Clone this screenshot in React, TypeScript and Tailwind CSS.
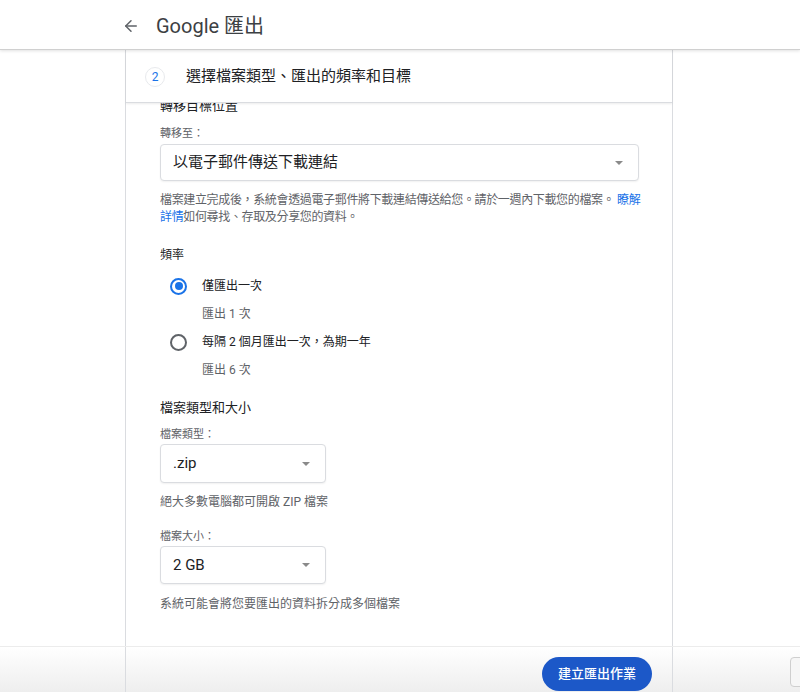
import { ArrowLeft } from 'lucide-react';

const font = { fontFamily: 'Roboto, "Noto Sans CJK TC", sans-serif' };

function Caret() {
  return (
    <span className="h-0 w-0 border-x-[4px] border-t-[4px] border-x-transparent border-t-[#8a8a8a]" />
  );
}

function Select({ value, className = '' }: { value: string; className?: string }) {
  return (
    <div
      className={`flex items-center justify-between rounded-[4px] border border-[#dadce0] bg-white pl-[12px] pr-[15px] text-[15px] text-[#202124] shadow-[0_1px_2px_rgba(0,0,0,0.06)] ${className}`}
    >
      <span>{value}</span>
      <Caret />
    </div>
  );
}

function Radio({ checked, label }: { checked: boolean; label: string }) {
  return (
    <div className="flex h-[24px] items-center pl-[10px]">
      <span
        className={`flex h-[17px] w-[17px] items-center justify-center rounded-full border-2 ${
          checked ? 'border-[#1a73e8]' : 'border-[#5f6368]'
        }`}
      >
        {checked && <span className="h-[8px] w-[8px] rounded-full bg-[#1a73e8]" />}
      </span>
      <span className="ml-[15px] text-[12px] text-[#202124]">{label}</span>
    </div>
  );
}

export default function App() {
  return (
    <div className="flex h-[692px] w-full flex-col overflow-hidden bg-white" style={font}>
      {/* Top bar */}
      <header className="relative z-20 flex h-[50px] shrink-0 items-center border-b border-[#d0d0d0] bg-white pl-[122px] pt-[3px] shadow-[0_1px_3px_rgba(0,0,0,0.12)]">
        <ArrowLeft size={18} strokeWidth={2} className="text-[#5f6368]" />
        <h1 className="ml-[16px] text-[20px] text-[#3c4043]">Google 匯出</h1>
      </header>

      {/* Body */}
      <div className="flex min-h-0 flex-1">
        <div className="w-[125px] shrink-0" />
        <section className="flex w-[548px] shrink-0 flex-col border-x border-[#dadce0]">
          <div className="relative z-10 flex h-[53px] shrink-0 items-center border-b border-[#dadce0] bg-white pl-[19px] pt-[1px] shadow-[0_1px_2px_rgba(0,0,0,0.08)]">
            <span className="flex h-[20px] w-[20px] items-center justify-center rounded-full border border-[#e8eaed] text-[12px] text-[#1a73e8]">
              2
            </span>
            <span className="ml-[21px] text-[15px] text-[#202124]">選擇檔案類型、匯出的頻率和目標</span>
          </div>

          <div className="min-h-0 flex-1 overflow-hidden pl-[34px] pr-[34px]">
            <h3 className="-mt-[6px] text-[13px] leading-[18px] text-[#202124]">轉移目標位置</h3>
            <div className="mt-[11px] text-[11px] leading-[16px] text-[#5f6368]">轉移至：</div>
            <Select value="以電子郵件傳送下載連結" className="mt-[2px] h-[37px] w-[479px]" />
            <p className="-mr-[8px] mt-[11px] text-[12px] leading-[17px] tracking-[-0.35px] text-[#5f6368]">
              檔案建立完成後，系統會透過電子郵件將下載連結傳送給您。請於一週內下載您的檔案。{' '}
              <span className="text-[#1a73e8]">瞭解詳情</span>如何尋找、存取及分享您的資料。
            </p>

            <h3 className="mt-[20px] text-[12px] leading-[18px] text-[#202124]">頻率</h3>
            <div className="mt-[10px]">
              <Radio checked label="僅匯出一次" />
              <div className="mt-[7px] pl-[42px] text-[12px] leading-[18px] text-[#5f6368]">匯出 1 次</div>
              <div className="mt-[7px]">
                <Radio checked={false} label="每隔 2 個月匯出一次，為期一年" />
              </div>
              <div className="mt-[7px] pl-[42px] text-[12px] leading-[18px] text-[#5f6368]">匯出 6 次</div>
            </div>

            <h3 className="mt-[20px] text-[13px] leading-[18px] text-[#202124]">檔案類型和大小</h3>
            <div className="mt-[10px] text-[11px] leading-[16px] text-[#5f6368]">檔案類型：</div>
            <Select value=".zip" className="mt-[1px] h-[39px] w-[166px]" />
            <p className="mt-[10px] text-[12px] leading-[18px] text-[#5f6368]">絕大多數電腦都可開啟 ZIP 檔案</p>

            <div className="mt-[18px] text-[11px] leading-[16px] text-[#5f6368]">檔案大小：</div>
            <Select value="2 GB" className="mt-[1px] h-[38px] w-[166px]" />
            <p className="mt-[11px] text-[12px] leading-[18px] text-[#5f6368]">系統可能會將您要匯出的資料拆分成多個檔案</p>
          </div>
        </section>
        <div className="flex-1" />
      </div>

      {/* Footer bar */}
      <footer className="flex h-[46px] shrink-0 border-t border-[#ececec] bg-gradient-to-b from-white to-[#eeeeee]">
        <div className="w-[125px] shrink-0" />
        <div className="flex w-[548px] shrink-0 items-start justify-end border-x border-[#dadce0] pr-[20px] pt-[10px]">
          <button className="h-[34px] w-[110px] rounded-full bg-[#1c58c8] text-[13px] font-medium text-white">
            建立匯出作業
          </button>
        </div>
        <div className="flex flex-1 items-start justify-end pt-[10px]">
          <span className="-mr-[12px] h-[30px] w-[22px] rounded-[4px] border border-[#cfcfcf] bg-[#f6f6f6]" />
        </div>
      </footer>
    </div>
  );
}
